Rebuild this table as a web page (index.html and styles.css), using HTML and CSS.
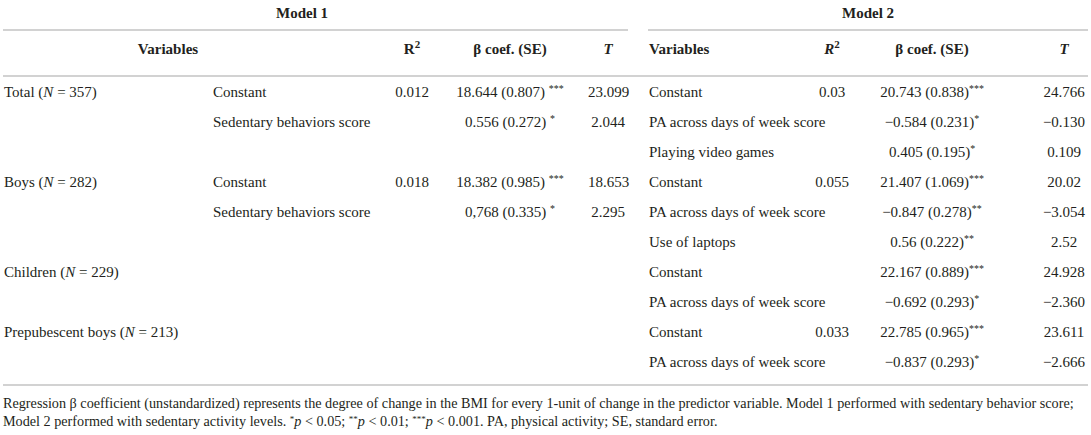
FILE: index.html
```html
<!DOCTYPE html>
<html lang="en">
<head>
    <meta charset="UTF-8">
    <meta name="viewport" content="width=device-width, initial-scale=1.0">
    <title>Regression models</title>
    <link rel="stylesheet" href="styles.css">
</head>
<body>

    <table class="reg-table">
        <colgroup>
            <col class="c-group">
            <col class="c-var">
            <col class="c-r2">
            <col class="c-coef">
            <col class="c-t">
            <col class="c-gap">
            <col class="c-var2">
            <col class="c-r2b">
            <col class="c-coef2">
            <col class="c-t2">
        </colgroup>
        <thead>
            <!-- Model titles -->
            <tr class="models">
                <th colspan="5" class="model model-1">Model 1</th>
                <th class="gap"></th>
                <th colspan="4" class="model">Model 2</th>
            </tr>
            <!-- Column titles -->
            <tr class="heads">
                <th colspan="2" class="head-var">Variables</th>
                <th>R<sup>2</sup></th>
                <th>β coef. (SE)</th>
                <th class="t1"><i>T</i></th>
                <th></th>
                <th class="lbl">Variables</th>
                <th><i>R</i><sup>2</sup></th>
                <th class="coef2">β coef. (SE)</th>
                <th><i>T</i></th>
            </tr>
        </thead>
        <tbody>
            <tr>
                <td class="lbl">Total (<i>N</i> = 357)</td>
                <td class="lbl">Constant</td>
                <td>0.012</td>
                <td>18.644 (0.807) <sup>***</sup></td>
                <td class="t1">23.099</td>
                <td></td>
                <td class="lbl">Constant</td>
                <td>0.03</td>
                <td class="coef2">20.743 (0.838)<sup>***</sup></td>
                <td>24.766</td>
            </tr>
            <tr>
                <td></td>
                <td class="lbl">Sedentary behaviors score</td>
                <td></td>
                <td>0.556 (0.272) <sup>*</sup></td>
                <td class="t1">2.044</td>
                <td></td>
                <td class="lbl">PA across days of week score</td>
                <td></td>
                <td class="coef2">−0.584 (0.231)<sup>*</sup></td>
                <td>−0.130</td>
            </tr>
            <tr>
                <td></td>
                <td></td>
                <td></td>
                <td></td>
                <td class="t1"></td>
                <td></td>
                <td class="lbl">Playing video games</td>
                <td></td>
                <td class="coef2">0.405 (0.195)<sup>*</sup></td>
                <td>0.109</td>
            </tr>
            <tr>
                <td class="lbl">Boys (<i>N</i> = 282)</td>
                <td class="lbl">Constant</td>
                <td>0.018</td>
                <td>18.382 (0.985) <sup>***</sup></td>
                <td class="t1">18.653</td>
                <td></td>
                <td class="lbl">Constant</td>
                <td>0.055</td>
                <td class="coef2">21.407 (1.069)<sup>***</sup></td>
                <td>20.02</td>
            </tr>
            <tr>
                <td></td>
                <td class="lbl">Sedentary behaviors score</td>
                <td></td>
                <td>0,768 (0.335) <sup>*</sup></td>
                <td class="t1">2.295</td>
                <td></td>
                <td class="lbl">PA across days of week score</td>
                <td></td>
                <td class="coef2">−0.847 (0.278)<sup>**</sup></td>
                <td>−3.054</td>
            </tr>
            <tr>
                <td></td>
                <td></td>
                <td></td>
                <td></td>
                <td class="t1"></td>
                <td></td>
                <td class="lbl">Use of laptops</td>
                <td></td>
                <td class="coef2">0.56 (0.222)<sup>**</sup></td>
                <td>2.52</td>
            </tr>
            <tr>
                <td class="lbl">Children (<i>N</i> = 229)</td>
                <td></td>
                <td></td>
                <td></td>
                <td class="t1"></td>
                <td></td>
                <td class="lbl">Constant</td>
                <td></td>
                <td class="coef2">22.167 (0.889)<sup>***</sup></td>
                <td>24.928</td>
            </tr>
            <tr>
                <td></td>
                <td></td>
                <td></td>
                <td></td>
                <td class="t1"></td>
                <td></td>
                <td class="lbl">PA across days of week score</td>
                <td></td>
                <td class="coef2">−0.692 (0.293)<sup>*</sup></td>
                <td>−2.360</td>
            </tr>
            <tr>
                <td class="lbl">Prepubescent boys (<i>N</i> = 213)</td>
                <td></td>
                <td></td>
                <td></td>
                <td class="t1"></td>
                <td></td>
                <td class="lbl">Constant</td>
                <td>0.033</td>
                <td class="coef2">22.785 (0.965)<sup>***</sup></td>
                <td>23.611</td>
            </tr>
            <tr class="last">
                <td></td>
                <td></td>
                <td></td>
                <td></td>
                <td class="t1"></td>
                <td></td>
                <td class="lbl">PA across days of week score</td>
                <td></td>
                <td class="coef2">−0.837 (0.293)<sup>*</sup></td>
                <td>−2.666</td>
            </tr>
        </tbody>
    </table>

    <!-- Table footnote -->
    <p class="note">
        <span class="note-line">Regression β coefficient (unstandardized) represents the degree of change in the BMI for every 1-unit of change in the predictor variable. Model 1 performed with sedentary behavior score;</span>
        <span class="note-line">Model 2 performed with sedentary activity levels. <sup>*</sup><i>p</i> &lt; 0.05; <sup>**</sup><i>p</i> &lt; 0.01; <sup>***</sup><i>p</i> &lt; 0.001. PA, physical activity; SE, standard error.</span>
    </p>

</body>
</html>
```

FILE: styles.css
```css
body {
    font-family: "Liberation Serif", "Times New Roman", serif;
    margin: 0;
    padding: 0 3px;
    background-color: white;
    color: #231f20;
}

.reg-table {
    width: 1085px;
    table-layout: fixed;
    border-collapse: collapse;
    font-size: 15px;
}

.c-group { width: 209px; }
.c-var   { width: 168px; }
.c-r2    { width: 64px; }
.c-coef  { width: 132px; }
.c-t     { width: 52px; }
.c-gap   { width: 20px; }
.c-var2  { width: 152px; }
.c-r2b   { width: 64px; }
.c-coef2 { width: 176px; }
.c-t2    { width: 48px; }

.reg-table th,
.reg-table td {
    padding: 0;
    text-align: center;
    white-space: nowrap;
}

.reg-table .lbl {
    text-align: left;
    padding-left: 1px;
}

.reg-table sup {
    font-size: 10px;
    line-height: 0;
    vertical-align: 5px;
}

/* Header rows */
.models th {
    height: 29px;
    vertical-align: top;
    line-height: 26px;
    font-size: 15px;
}

.models .model {
    border-bottom: 2px solid #d2d2d2;
}

.models .model-1 {
    padding-right: 27px;
}

.heads th {
    height: 46px;
    vertical-align: top;
    padding-top: 6px;
    line-height: 24px;
    border-bottom: 2px solid #d2d2d2;
    box-sizing: border-box;
}

.heads sup {
    font-size: 11px;
    vertical-align: 6px;
}

.heads .head-var {
    padding-right: 47px;
}

/* Body rows */
.reg-table td {
    line-height: 30px;
    height: 30px;
}

.reg-table .t1 {
    padding-left: 12px;
}

.reg-table .coef2 {
    padding-right: 40px;
}

.reg-table .last td {
    height: 37px;
    vertical-align: top;
    border-bottom: 2px solid #d2d2d2;
}

.note {
    margin: 8px 0 0;
    font-size: 14.2px;
    line-height: 18px;
}

.note-line {
    display: block;
    white-space: nowrap;
}

.note sup {
    font-size: 9px;
    line-height: 0;
    vertical-align: 4px;
}
```
